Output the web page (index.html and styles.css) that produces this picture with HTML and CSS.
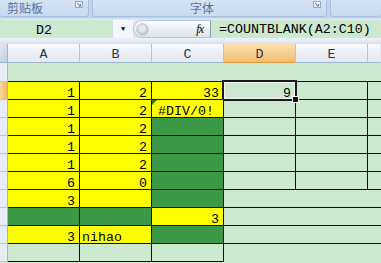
FILE: index.html
```html
<!DOCTYPE html>
<html lang="zh">
<head>
  <meta charset="utf-8" />
  <title>COUNTBLANK</title>
  <link rel="stylesheet" href="styles.css">
</head>
<body>
  <div class="ribbon">
    <div class="group clip">
      <span>剪贴板</span>
      <svg class="launch" width="8" height="7" viewBox="0 0 8 7"><rect x="0.5" y="0.5" width="7" height="6" fill="#eef2f7" stroke="#9aa9bd"/><path d="M2 2 L5.5 5 M5.5 3 V5 H3.5" stroke="#6b7b90" fill="none"/></svg>
    </div>
    <div class="group font">
      <span>字体</span>
      <svg class="launch" width="8" height="7" viewBox="0 0 8 7"><rect x="0.5" y="0.5" width="7" height="6" fill="#eef2f7" stroke="#9aa9bd"/><path d="M2 2 L5.5 5 M5.5 3 V5 H3.5" stroke="#6b7b90" fill="none"/></svg>
    </div>
    <div class="group rest"></div>
  </div>
  <div class="strip"></div>

  <div class="fbar">
    <div class="namebox">D2</div>
    <div class="drop">&#9660;</div>
    <div class="pill">
      <span class="knob"></span>
      <span class="fx">fx</span>
    </div>
    <div class="formula">=COUNTBLANK(A2:C10)</div>
  </div>
  <div class="gap"></div>

  <div class="sheet">
    <div class="corner"></div>
    <div class="hd">A</div><div class="hd">B</div><div class="hd">C</div><div class="hd on">D</div><div class="hd">E</div><div class="hd last"></div>

    <div class="rh"></div>
    <div class="c top"></div><div class="c top"></div><div class="c top"></div><div class="c top"></div><div class="c top"></div><div class="c top"></div>

    <div class="rh on"></div>
    <div class="c b y">1</div><div class="c b y">2</div><div class="c b y">33</div><div class="c b sel">9</div><div class="c b"></div><div class="c h"></div>

    <div class="rh"></div>
    <div class="c b y">1</div><div class="c b y">2</div><div class="c b y err">#DIV/0!</div><div class="c b"></div><div class="c b"></div><div class="c h"></div>

    <div class="rh"></div>
    <div class="c b y">1</div><div class="c b y">2</div><div class="c b g"></div><div class="c b"></div><div class="c b"></div><div class="c h"></div>

    <div class="rh"></div>
    <div class="c b y">1</div><div class="c b y">2</div><div class="c b g"></div><div class="c b"></div><div class="c b"></div><div class="c h"></div>

    <div class="rh"></div>
    <div class="c b y">1</div><div class="c b y">2</div><div class="c b g"></div><div class="c b"></div><div class="c b"></div><div class="c h"></div>

    <div class="rh"></div>
    <div class="c b y">6</div><div class="c b y">0</div><div class="c b g"></div><div class="c b"></div><div class="c b"></div><div class="c h"></div>

    <div class="rh"></div>
    <div class="c b y">3</div><div class="c b y"></div><div class="c b g"></div><div class="c h"></div><div class="c h"></div><div class="c h"></div>

    <div class="rh"></div>
    <div class="c b g"></div><div class="c b g"></div><div class="c b y">3</div><div class="c h"></div><div class="c h"></div><div class="c h"></div>

    <div class="rh"></div>
    <div class="c b y">3</div><div class="c b y txt">nihao</div><div class="c b g"></div><div class="c h"></div><div class="c h"></div><div class="c h"></div>

    <div class="rh"></div>
    <div class="c b"></div><div class="c b"></div><div class="c b"></div><div class="c"></div><div class="c"></div><div class="c"></div>
  </div>
</body>
</html>
```

FILE: styles.css
```css
body {
  margin: 0;
  width: 381px;
  height: 263px;
  overflow: hidden;
  background: #cce8cf;
  font-family: "Liberation Mono", "DejaVu Sans Mono", monospace;
  font-size: 13.3px;
  color: #000;
}

/* ribbon group labels */
.ribbon {
  display: flex;
  gap: 3px;
  height: 17px;
  background: #c3d5ec;
}
.group {
  display: flex;
  align-items: flex-start;
  box-sizing: border-box;
  height: 17px;
  background: linear-gradient(#d5e3f4, #c9dbf0);
  border: 1px solid #a9bfdc;
  border-top: 0;
  border-radius: 0 0 3px 3px;
  font-family: "Noto Sans CJK SC", sans-serif;
  font-size: 12px;
  color: #5b7296;
}
.group span {
  line-height: 15px;
}
.clip {
  width: 89px;
  padding-left: 7px;
  border-left: 0;
}
.font {
  width: 235px;
  padding-left: 97px;
}
.rest {
  flex: 1;
  border-right: 0;
}
.launch {
  margin-left: auto;
  margin-right: 5px;
  margin-top: 1px;
}
.strip {
  height: 3px;
  background: linear-gradient(#b9cde6, #e4edf8);
}

/* formula bar */
.fbar {
  display: flex;
  height: 18px;
  background: #dfe7f1;
}
.namebox {
  width: 113px;
  box-sizing: border-box;
  padding-left: 36px;
  background: #cce8cf;
  line-height: 21px;
}
.drop {
  width: 20px;
  background: #f3f6fa;
  font-size: 7px;
  line-height: 19px;
  text-align: center;
}
.pill {
  display: flex;
  align-items: center;
  width: 78px;
  box-sizing: border-box;
  background: linear-gradient(#fbfcfe, #dde4ee);
  border: 1px solid #b7c5d8;
  border-right: 1px solid #8e9cb0;
  border-radius: 9px 0 0 9px;
}
.knob {
  width: 11px;
  height: 11px;
  margin-left: 2px;
  border-radius: 50%;
  background: radial-gradient(circle at 45% 40%, #e4e8ee 0 30%, #b9c1cc 70%);
  border: 1px solid #c9d0da;
}
.fx {
  margin-left: auto;
  margin-right: 7px;
  font-family: "Liberation Serif", serif;
  font-style: italic;
  font-size: 12px;
  letter-spacing: -1px;
}
.formula {
  flex: 1;
  padding-left: 8px;
  background: #cce8cf;
  line-height: 20px;
  white-space: nowrap;
}
.gap {
  height: 6px;
  background: linear-gradient(#eef3f9, #d6e1ee);
}

/* sheet */
.sheet {
  display: grid;
  grid-template-columns: 8px repeat(5, 72px) 1fr;
  grid-template-rows: 19px 19px repeat(10, 18px);
}
.sheet > div {
  box-sizing: border-box;
  position: relative;
}
.corner {
  background: linear-gradient(135deg, #dfe6ef, #c5d0de);
  border-right: 1px solid #9eb6ce;
  border-bottom: 1px solid #9eb6ce;
}
.hd {
  background: linear-gradient(#f7f9fc, #e3e9f1);
  border-right: 1px solid #b6c7da;
  border-bottom: 1px solid #9eb6ce;
  text-align: center;
  line-height: 22px;
  color: #243650;
}
.hd.on {
  background: linear-gradient(#fbe1ad, #f3bd72);
  border-bottom-color: #e19a3c;
}
.hd.last {
  border-right-color: #dfe6ef;
}
.rh {
  background: #e6edf7;
  border-right: 1px solid #9eb6ce;
  border-bottom: 1px solid #b6c7da;
}
.rh.on {
  background: linear-gradient(90deg, #fbd89d, #f2b768);
}
.c {
  text-align: right;
  padding-right: 4px;
  line-height: 24px;
  white-space: nowrap;
}
.top {
  border-bottom: 1px solid #111;
}
.b {
  border-right: 1px solid #111;
  border-bottom: 1px solid #111;
}
.h {
  border-bottom: 1px solid #111;
}
.y {
  background: #ffff00;
}
.g {
  background: #3a9847;
}
.txt {
  text-align: left;
  padding-left: 2px;
}
.err {
  text-align: left;
  padding-left: 6px;
}
.err::before {
  content: "";
  position: absolute;
  left: 0;
  top: 0;
  border-top: 5px solid #2f7d2f;
  border-right: 5px solid transparent;
}
.sel::after {
  content: "";
  position: absolute;
  left: -2px;
  top: -2px;
  right: -2px;
  bottom: -2px;
  border: 2px solid #1a1a1a;
  box-shadow: inset 0 0 0 1px #eef6ee;
}
.sel::before {
  content: "";
  position: absolute;
  right: -4px;
  bottom: -4px;
  width: 5px;
  height: 5px;
  background: #111;
  border: 1px solid #fff;
  z-index: 1;
}
```
